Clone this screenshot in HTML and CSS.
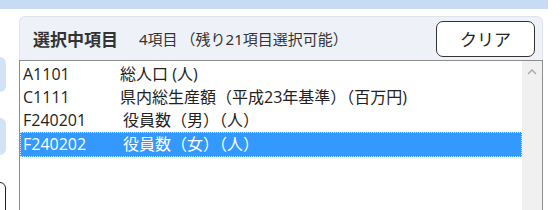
FILE: index.html
```html
<!DOCTYPE html>
<html lang="ja">
<head>
    <meta charset="UTF-8">
    <title>選択中項目</title>
    <link rel="stylesheet" href="styles.css">
</head>
<body>
    <div class="top-band"></div>

    <div class="main">
        <div class="side">
            <div class="side-tab"></div>
            <div class="side-tab side-tab-2"></div>
            <div class="side-button"></div>
        </div>

        <div class="panel">
            <div class="panel-header">
                <span class="panel-title">選択中項目</span>
                <span class="panel-count">4項目</span>
                <span class="panel-rest">（残り21項目選択可能）</span>
                <button class="clear-button">クリア</button>
            </div>

            <div class="list">
                <div class="list-items">
                    <div class="row"><span class="code">A1101</span><span class="name">総人口 (人)</span></div>
                    <div class="row"><span class="code">C1111</span><span class="name">県内総生産額（平成23年基準）（百万円)</span></div>
                    <div class="row"><span class="code code-long">F240201</span><span class="name">役員数（男）（人）</span></div>
                    <div class="row selected"><span class="code code-long">F240202</span><span class="name">役員数（女）（人）</span></div>
                </div>
                <div class="scrollbar">
                    <svg class="arrow-up" width="10" height="6" viewBox="0 0 10 6">
                        <path d="M1 5 L5 1 L9 5" fill="none" stroke="#a6a6a6" stroke-width="1.3"/>
                    </svg>
                </div>
            </div>
        </div>
    </div>
</body>
</html>
```

FILE: styles.css
```css
body {
    margin: 0;
    padding: 0;
    background: #fff;
    color: #333;
    font-family: "Noto Sans", "Noto Sans CJK JP", sans-serif;
    overflow: hidden;
}

.top-band {
    width: 548px;
    height: 9px;
    background-color: #c7dcf4;
}

.main {
    display: flex;
    align-items: flex-start;
}

/* clipped sidebar on the left edge */
.side {
    width: 6px;
    overflow: hidden;
    flex-shrink: 0;
    display: flex;
    flex-direction: column;
}

.side-tab {
    width: 30px;
    height: 35px;
    margin-top: 48px;
    margin-left: -24px;
    background-color: #d3e3f6;
    border-radius: 6px;
}

.side-tab-2 {
    height: 37px;
    margin-top: 26px;
}

.side-button {
    width: 40px;
    height: 40px;
    margin-top: 27px;
    margin-left: -36px;
    border: 1px solid #222;
    border-radius: 6px;
    background: #fff;
}

.panel {
    margin-left: 13px;
    margin-top: 7px;
    width: 524px;
}

.panel-header {
    height: 43px;
    display: flex;
    align-items: center;
    padding: 0 7px 0 13px;
    background-color: #eef2f8;
    border: 1px solid #dfe4ec;
    border-bottom: none;
    border-radius: 6px 6px 0 0;
}

.panel-title {
    font-size: 17px;
    font-weight: bold;
    color: #333;
}

.panel-count {
    font-size: 15px;
    margin-left: 21px;
}

.panel-rest {
    font-size: 15px;
    margin-left: 3px;
}

.clear-button {
    margin-left: auto;
    width: 99px;
    height: 36px;
    background: #fff;
    border: 1px solid #333;
    border-radius: 7px;
    font-family: "Noto Sans CJK JP", sans-serif;
    font-size: 17px;
    color: #222;
}

.list {
    display: flex;
    height: 160px;
    border: 1px solid #8c8c8c;
    background: #fff;
}

.list-items {
    flex: 1;
    padding-top: 2px;
}

.row {
    height: 23px;
    line-height: 23px;
    font-family: "Open Sans", "Noto Sans CJK JP", sans-serif;
    font-size: 16px;
    color: #222;
    padding-left: 3px;
    white-space: nowrap;
    box-sizing: border-box;
}

.row.selected {
    height: 25px;
    line-height: 23px;
    background-color: #3399ff;
    color: #fff;
    border: 1px dotted #d8e8ff;
    padding-left: 2px;
}

.code {
    display: inline-block;
    width: 97px;
}

.code-long {
    width: 100px;
}

.scrollbar {
    width: 20px;
    background-color: #f0f0f0;
    display: flex;
    justify-content: center;
}

.arrow-up {
    margin-top: 8px;
}
```
